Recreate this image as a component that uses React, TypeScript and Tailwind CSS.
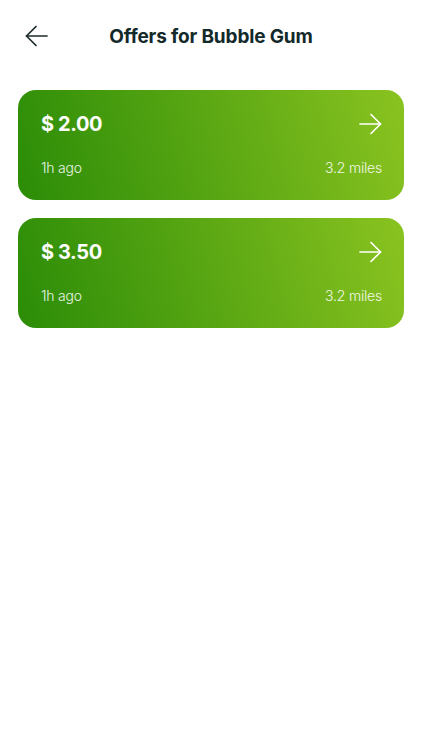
import * as React from "react"

const offers = [
  { price: "$ 2.00", time: "1h ago", distance: "3.2 miles" },
  { price: "$ 3.50", time: "1h ago", distance: "3.2 miles" },
]

const Arrow = ({ dir }: { dir: "left" | "right" }) => (
  <svg width="23" height="22" viewBox="0 0 23 22" fill="none" stroke="currentColor" strokeWidth="1.7" strokeLinecap="round" strokeLinejoin="round">
    {dir === "left" ? (
      <>
        <path d="M22 11H1.5" />
        <path d="M11 1.5L1.5 11L11 20.5" />
      </>
    ) : (
      <>
        <path d="M1 11H21.5" />
        <path d="M12 1.5L21.5 11L12 20.5" />
      </>
    )}
  </svg>
)

export default function App() {
  return (
    <div className="w-[422px] h-[750px] bg-white" style={{ fontFamily: "Inter, 'Noto Sans', sans-serif" }}>
      <header className="relative h-[72px] flex items-center justify-center pt-[2px]">
        <button className="absolute left-[25px] top-[25px] text-[#1c2a2b]">
          <Arrow dir="left" />
        </button>
        <h1 className="text-[19px] font-bold text-[#13292a] tracking-[-0.15px]">Offers for Bubble Gum</h1>
      </header>
      <div className="flex flex-col gap-[18px] px-[18px] pt-[18px]">
        {offers.map((o, i) => (
          <div
            key={i}
            className="h-[110px] rounded-[18px] bg-[linear-gradient(75deg,#2b8c07_0%,#55a412_45%,#8ac320_100%)] pl-[23px] pr-[22px] pt-[19px] pb-[22px] flex flex-col justify-between text-white"
          >
            <div className="flex items-center justify-between">
              <span className="text-[20px] font-bold tracking-[-0.4px]">{o.price}</span>
              <Arrow dir="right" />
            </div>
            <div className="flex items-center justify-between text-[14px] leading-[20px] font-light text-white/90 tracking-[-0.2px]">
              <span>{o.time}</span>
              <span>{o.distance}</span>
            </div>
          </div>
        ))}
      </div>
    </div>
  )
}
